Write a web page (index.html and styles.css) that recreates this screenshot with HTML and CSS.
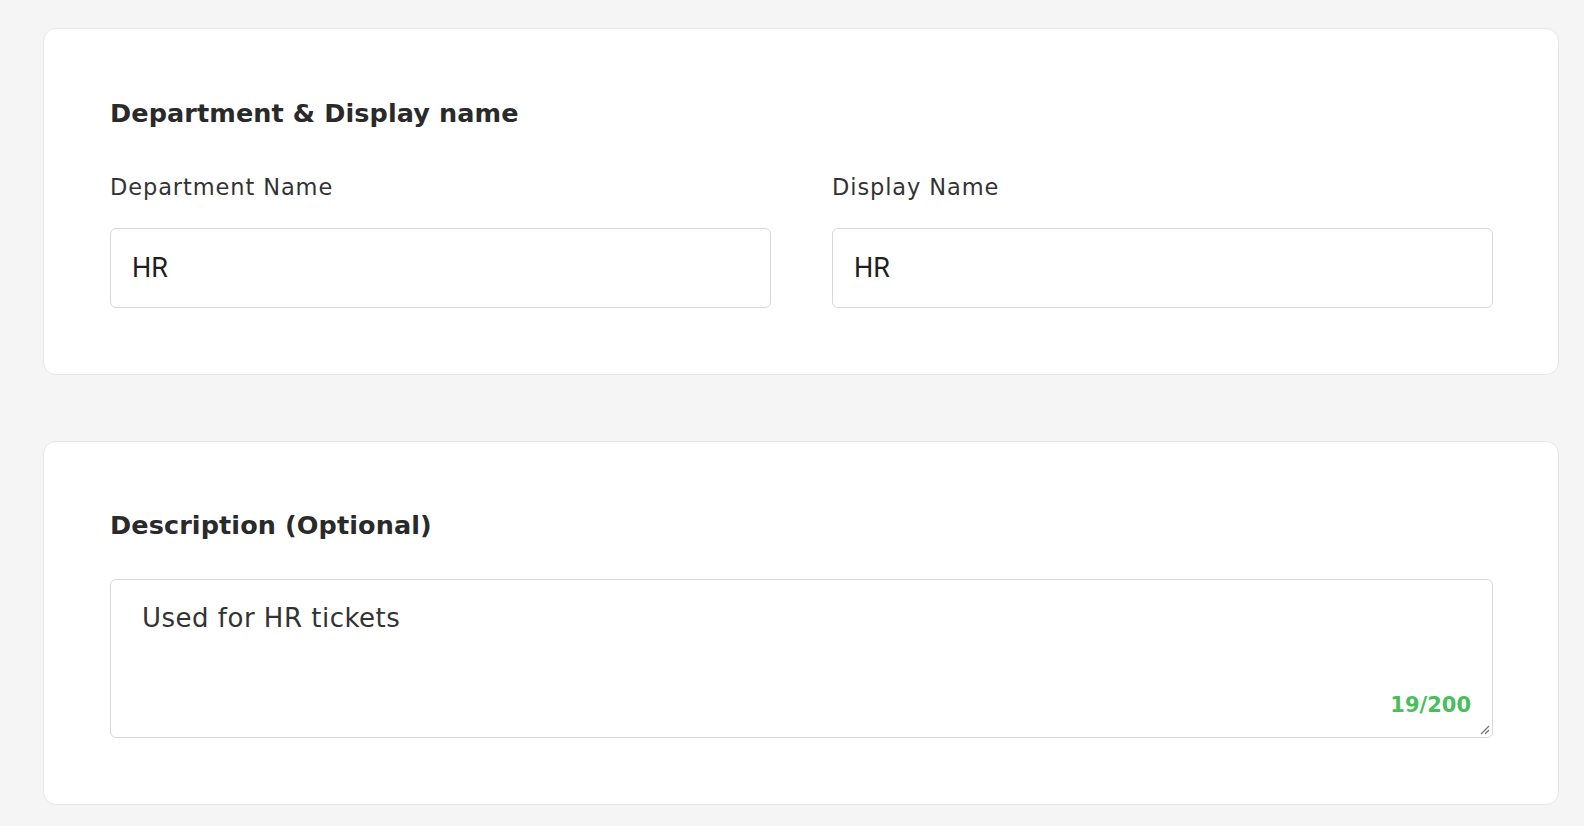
FILE: index.html
```html
<!DOCTYPE html>
<html lang="en">
<head>
<meta charset="utf-8">
<title>Department</title>
<link rel="stylesheet" href="styles.css">
</head>
<body>
<div class="page">
  <section class="card card-top">
    <h2 class="card-title">Department &amp; Display name</h2>
    <div class="fields">
      <div class="field">
        <label class="field-label">Department Name</label>
        <div class="input">HR</div>
      </div>
      <div class="field">
        <label class="field-label">Display Name</label>
        <div class="input">HR</div>
      </div>
    </div>
  </section>
  <section class="card card-bottom">
    <h2 class="card-title">Description (Optional)</h2>
    <div class="textarea">
      <div class="textarea-text">Used for HR tickets</div>
      <span class="counter">19/200</span>
      <svg class="resize" width="12" height="12" viewBox="0 0 12 12"><path d="M11 3 L3 11 M11 7 L7 11" stroke="#777" stroke-width="1.3" fill="none"/></svg>
    </div>
  </section>
</div>
</body>
</html>
```
FILE: styles.css
```css
* { box-sizing: border-box; }
html, body { margin: 0; padding: 0; background: #f5f5f5; }
body { font-family: "DejaVu Sans", "Noto Sans", sans-serif; color: #2b2b2b; }
.page {
  width: 1584px;
  height: 826px;
  padding: 28px 25px 0 43px;
  display: flex;
  flex-direction: column;
  gap: 66px;
  overflow: hidden;
}
.card {
  background: #fff;
  border: 1px solid #e7e7e7;
  border-radius: 13px;
  padding: 66px 65px 66px 66px;
}
.card-bottom { padding-top: 65px; }
.card-title {
  margin: 0;
  font-size: 25.5px;
  line-height: 36px;
  font-weight: 700;
  letter-spacing: 0.1px;
  color: #2a2a2a;
}
.fields {
  margin-top: 41px;
  display: grid;
  grid-template-columns: 661px 661px;
  column-gap: 61px;
}
.field { display: flex; flex-direction: column; }
.field-label {
  font-size: 22.5px;
  line-height: 30px;
  letter-spacing: 0.9px;
  color: #333;
  margin-bottom: 26px;
}
.input {
  height: 80px;
  border: 1px solid #d8d8d8;
  border-radius: 6px;
  padding: 0 21px;
  display: flex;
  align-items: center;
  font-family: "Roboto", sans-serif;
  font-size: 27px;
  color: #1f1f1f;
}
.textarea {
  position: relative;
  margin-top: 36px;
  height: 159px;
  border: 1px solid #d8d8d8;
  border-radius: 6px;
  padding: 20px 31px;
}
.textarea-text {
  font-size: 26px;
  line-height: 36px;
  letter-spacing: 0.5px;
  color: #333;
}
.counter {
  position: absolute;
  right: 21px;
  bottom: 17px;
  font-size: 21px;
  line-height: 30px;
  font-weight: 700;
  color: #48bf5a;
}
.resize {
  position: absolute;
  right: 2px;
  bottom: 2px;
}
```
